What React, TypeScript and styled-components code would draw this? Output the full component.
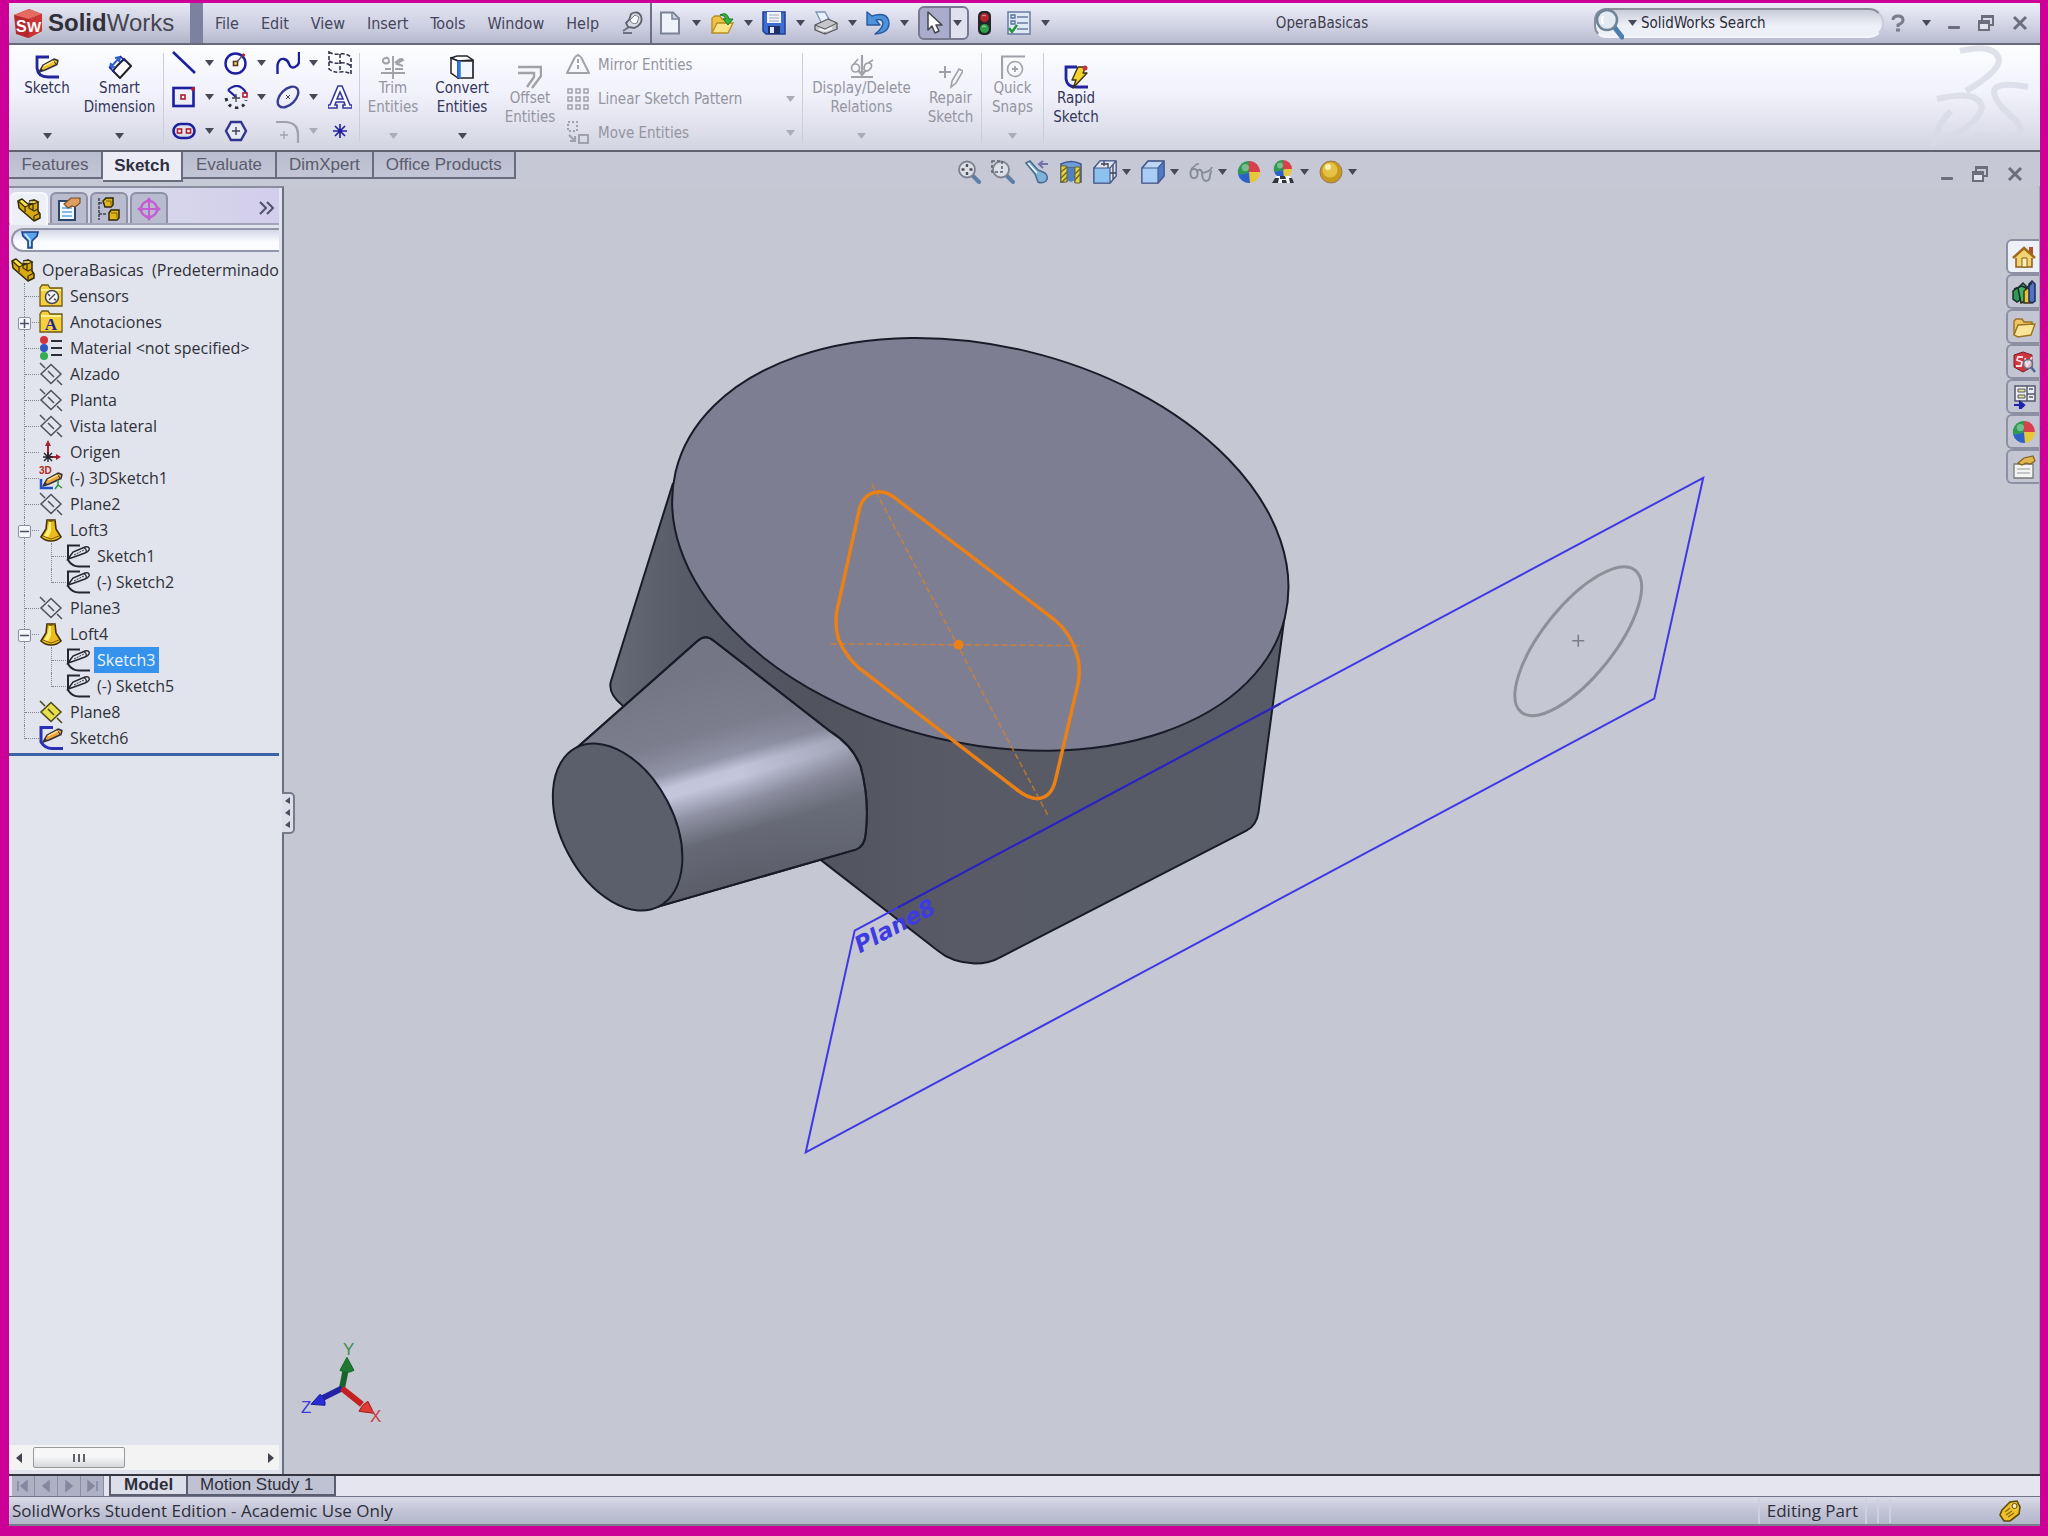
import React from "react";
import styled, { createGlobalStyle, css } from "styled-components";

const ui = `"DejaVu Sans Condensed", "DejaVu Sans", "Liberation Sans", sans-serif`;
const segoe = `"Open Sans", "Noto Sans", sans-serif`;
const arial = `"Liberation Sans", Arial, sans-serif`;

const Global = createGlobalStyle`
  *, *::before, *::after { box-sizing: border-box; }
  body { margin: 0; background: #cc0096; }
  button, input { font: inherit; color: inherit; margin: 0; padding: 0; border: 0; background: none; }
  svg { display: block; flex: none; }
  ul { list-style: none; margin: 0; padding: 0; }
`;

/* ---------- shell ---------- */

const Frame = styled.div`
  min-height: 100vh;
  display: flex;
  flex-direction: column;
  padding: 3px 8px 10px 9px;
  background: #cc0096;
  color: #3b3c50;
  font: 15px/19px ${ui};
`;

const TitleBar = styled.header`
  display: flex;
  align-items: stretch;
  height: 42px;
  border-bottom: 2px solid #666a7a;
  background: linear-gradient(#eceefa, #d5d7e7 50%, #b8bbcf);
`;

const Brand = styled.div`
  display: flex;
  align-items: center;
  gap: 5px;
  width: 181px;
  padding-left: 4px;
  background: linear-gradient(#e6e8f4, #c9cbdd 60%, #b2b5c9);
`;

const BrandName = styled.h1`
  margin: 0;
  color: #45464f;
  font: 400 24px/30px ${arial};
  b { color: #2f3038; }
`;

const MenuBar = styled.nav`
  display: flex;
  align-items: center;
  padding: 0 5px 0 1px;
  border-left: 13px solid #7d81a0;
  border-right: 2px solid #6d7086;
  background: linear-gradient(#e2e4f2, #cdcfe1 60%, #b6b9cd);
  > :last-child { margin-left: 11px; }
`;

const MenuItem = styled.button`
  height: 40px;
  padding: 0 11px;
  color: #44455a;
  font-size: 16px;
`;

const QuickBar = styled.div`
  display: flex;
  align-items: center;
  padding-left: 6px;
  gap: 9px;
`;

const Tool = styled.button<{ $gap?: number }>`
  display: inline-flex;
  align-items: center;
  gap: ${(p) => p.$gap ?? 10}px;
  height: 32px;
`;

const SelectTool = styled(Tool)`
  height: 34px;
  width: 51px;
  padding-left: 5px;
  gap: 10px;
  border: 2px solid #767990;
  border-radius: 6px;
  background: linear-gradient(90deg, #a9accb 0 29px, #767990 29px 31px, #dfe1ee 31px);
`;

const DocTitle = styled.span`
  flex: 1;
  align-self: center;
  text-align: center;
  color: #3d3e4e;
`;

const SearchBox = styled.label`
  align-self: center;
  display: flex;
  align-items: center;
  gap: 4px;
  width: 290px;
  height: 30px;
  border: 2px solid #8a8d9c;
  border-bottom-color: #f4f5fb;
  border-right-color: #c9cbd8;
  border-radius: 12px 15px 15px 12px;
  background: linear-gradient(#c9cbda, #eef0f8 60%);
`;

const SearchInput = styled.input`
  flex: 1;
  min-width: 0;
  height: 24px;
  color: #2b2c38;
  outline: none;
  &::placeholder { color: #2b2c38; opacity: 1; }
`;

const WindowControls = styled.div<{ $gap: number; $end: number }>`
  display: flex;
  align-items: center;
  gap: ${(p) => p.$gap}px;
  padding-right: ${(p) => p.$end}px;
  padding-left: 7px;
`;

/* ---------- ribbon ---------- */

const Ribbon = styled.section`
  display: flex;
  height: 107px;
  padding-left: 9px;
  border-bottom: 2px solid #60636f;
  background: linear-gradient(#fcfeff, #f1f2fb 45%, #e4e5f0 70%, #d2d4e1);
`;

const Divider = styled.span`
  width: 1px;
  margin: 8px 0;
  background: #cbcdd9;
`;

const BigButton = styled.button<{ $w: number; $low?: boolean; disabled?: boolean }>`
  display: flex;
  flex-direction: column;
  align-items: center;
  width: ${(p) => p.$w}px;
  padding: ${(p) => (p.$low ? 20 : 10)}px 0 11px;
  line-height: 19px;
  white-space: nowrap;
  color: ${(p) => (p.disabled ? "#94959f" : "#34355a")};
  > :last-child { margin-top: ${(p) => (p.$low ? 0 : "auto")}; }
`;

const ToolGrid = styled.div`
  display: grid;
  grid-template-columns: repeat(3, 52px) 24px;
  grid-auto-rows: 34px;
  padding: 2px 7px 0 8px;
`;

const SmallList = styled.div`
  display: grid;
  grid-auto-rows: 34px;
  width: 240px;
  padding: 3px 7px 0 4px;
`;

const SmallButton = styled.button`
  display: flex;
  align-items: center;
  gap: 8px;
  color: #94959f;
  text-align: left;
  span { flex: 1; }
`;

const Push = styled.div`
  flex: 1;
  display: flex;
  justify-content: flex-end;
  padding-right: 10px;
`;

/* ---------- tab strip ---------- */

const Strip = styled.div`
  display: flex;
  height: 34px;
  background: #c6c8d5;
`;

const Tabs = styled.div`
  display: flex;
  align-items: flex-start;
  width: 275px;
  white-space: nowrap;
`;

const ViewBar = styled.div`
  flex: 1;
  display: grid;
  grid-template-rows: 34px;
  > * { grid-area: 1 / 1; min-height: 0; }
  > :last-child { justify-self: end; padding-top: 9px; }
`;

const Tab = styled.button<{ $active?: boolean }>`
  flex: none;
  min-width: ${(p) => (p.$active ? 80 : 94)}px;
  height: ${(p) => (p.$active ? 30 : 27)}px;
  padding: 0 ${(p) => (p.$active ? 11 : 12)}px;
  border: solid #696c7c;
  border-width: 0 2px 2px 0;
  background: ${(p) => (p.$active ? "#ececf6" : "linear-gradient(#b9bcce, #c3c6d6)")};
  color: ${(p) => (p.$active ? "#2f3040" : "#5a5c6b")};
  font: ${(p) => (p.$active ? 700 : 400)} 17px/22px ${arial};
`;

const HeadsUp = styled.div`
  justify-self: center;
  display: flex;
  align-items: center;
  gap: 10px;
  padding: 6px 10px 0 0;
`;

/* ---------- work area ---------- */

const Work = styled.main`
  flex: 1;
  display: flex;
  min-height: 0;
`;

const Panel = styled.aside`
  position: relative;
  display: flex;
  flex-direction: column;
  width: 275px;
  padding-right: 3px;
  border-top: 2px solid #8b8ea1;
  border-right: 2px solid #6c6f82;
  background: #e1e4ec;
`;

const PanelTabs = styled.div`
  display: flex;
  align-items: flex-end;
  gap: 2px;
  height: 37px;
  padding-left: 1px;
  border-bottom: 2px solid #a2a5b8;
  background: linear-gradient(90deg, #d8daea 40%, #d2cdec);
`;

const PanelTab = styled.button<{ $active?: boolean }>`
  display: grid;
  place-items: center;
  width: 38px;
  height: 31px;
  border: 2px solid #8e91a6;
  border-bottom: 0;
  border-radius: 6px 6px 0 0;
  background: ${(p) => (p.$active ? "#eef0f8" : "#b9bccf")};
  ${(p) => p.$active && css`border-color: #f6f7fc; margin-bottom: -2px; height: 33px;`}
`;

const More = styled.button`
  margin: 0 4px 0 auto;
  height: 30px;
`;

const Filter = styled.label`
  display: flex;
  align-items: center;
  height: 24px;
  margin: 3px 0 5px 2px;
  padding-left: 8px;
  border: 2px solid #9296ab;
  border-right: 0;
  border-radius: 12px 0 0 12px;
  background: linear-gradient(#d4d6e6, #fbfcff 60%);
  input { flex: 1; min-width: 0; outline: none; }
`;

const Row = styled.li`
  position: relative;
  display: flex;
  align-items: center;
  height: 26px;
  white-space: nowrap;
  font: 16px/24px ${segoe};
  color: #30313a;
`;

const Guide = styled.span<{ $w: number; $end?: boolean }>`
  flex: none;
  align-self: flex-start;
  width: ${(p) => p.$w}px;
  height: ${(p) => (p.$end ? 14 : 26)}px;
  border-right: 1px dotted #85878f;
`;

const RootPad = styled.span`
  flex: none;
  width: 2px;
`;

const Dash = styled.span`
  flex: none;
  width: 14px;
  border-top: 1px dotted #85878f;
`;

const Expander = styled.button`
  position: absolute;
  left: 9px;
  top: 8px;
  width: 13px;
  height: 13px;
  display: grid;
  place-items: center;
  border: 1px solid #8c8fa3;
  border-radius: 2px;
  background: #f6f7fb;
`;

const RowLabel = styled.span<{ $selected?: boolean }>`
  margin-left: 4px;
  padding: 0 3px;
  line-height: 26px;
  ${(p) => p.$selected && css`background: #3593ee; color: #eef5ff;`}
`;

const Rollback = styled.div`
  height: 3px;
  margin-top: 2px;
  background: #3d62a6;
`;

const ScrollBar = styled.div`
  display: flex;
  align-items: center;
  gap: 10px;
  height: 25px;
  margin-top: auto;
  margin-bottom: 4px;
  padding: 0 4px 0 6px;
  background: #f3f3f4;
`;

const Thumb = styled.button`
  display: grid;
  place-items: center;
  width: 92px;
  height: 21px;
  margin-right: auto;
  border: 1px solid #97989c;
  border-radius: 2px;
  background: linear-gradient(#f7f7f8 45%, #d6d7da);
`;

const Handle = styled.button`
  position: absolute;
  left: 273px;
  top: 604px;
  width: 13px;
  height: 42px;
  display: grid;
  place-items: center;
  border: 2px solid #777a8c;
  border-left: 0;
  border-radius: 0 5px 5px 0;
  background: #dcdeea;
`;

const Viewport = styled.section`
  flex: 1;
  min-width: 0;
  display: grid;
  border-right: 1px solid #a5a7b6;
  background: #c5c8d3;
  > * { grid-area: 1 / 1; min-width: 0; min-height: 0; }
`;

const TaskPane = styled.nav`
  justify-self: end;
  align-self: start;
  display: grid;
  grid-auto-rows: 35px;
  margin-top: 53px;
`;

const TaskTab = styled.button<{ $active?: boolean }>`
  display: grid;
  place-items: center;
  width: 33px;
  border: 2px solid #8d90a3;
  border-right: 0;
  border-radius: 6px 0 0 6px;
  background: ${(p) => (p.$active ? "#eef0f8" : "#c3c5d3")};
`;

/* ---------- bottom ---------- */

const StudyBar = styled.div`
  display: flex;
  height: 23px;
  padding-left: 3px;
  border-top: 2px solid #34353f;
  border-bottom: 1px solid #72758a;
  background: #e4e5ef;
`;

const NavButton = styled.button`
  display: grid;
  place-items: center;
  width: 23px;
  border-right: 1px solid #8b8ea2;
  background: #aeb1c3;
`;

const StudyTab = styled.button<{ $active?: boolean }>`
  margin-left: ${(p) => (p.$active ? 5 : 0)}px;
  padding: 0 ${(p) => (p.$active ? 13 : 20)}px 0 ${(p) => (p.$active ? 13 : 12)}px;
  border: solid #5b5e70;
  border-width: 0 2px 2px ${(p) => (p.$active ? 2 : 0)}px;
  background: ${(p) => (p.$active ? "#dcdeea" : "#bfc2d2")};
  color: #2d2e3a;
  font: ${(p) => (p.$active ? 700 : 400)} 17px/18px ${arial};
`;

const StatusBar = styled.footer`
  display: flex;
  align-items: center;
  height: 29px;
  padding: 0 19px 0 3px;
  border-bottom: 2px solid #7b7d8e;
  background: linear-gradient(#d9dbe8, #c3c5d7 50%, #b3b6c9);
  color: #2d2e3a;
  font: 17px/26px ${segoe};
`;

const StatusCell = styled.span`
  margin-left: auto;
  padding: 0 7px;
  border: solid #ced0df;
  border-width: 0 2px;
`;

const StatusGap = styled.span`
  width: 12px;
  height: 24px;
  border-right: 2px solid #ced0df;
  &:last-of-type { margin-right: 108px; }
`;

/* ---------- icons ---------- */

type IconProps = { children: React.ReactNode; w?: number; h?: number };
const Icon = ({ children, w = 24, h = 24 }: IconProps) => (
  <svg width={w} height={h} viewBox={`0 0 ${w} ${h}`} fill="none" aria-hidden="true">
    {children}
  </svg>
);

const Caret = ({ dim }: { dim?: boolean }) => (
  <svg width="9" height="6" viewBox="0 0 9 6" aria-hidden="true">
    <path d="M0 0h9L4.5 6z" fill={dim ? "#aaacb6" : "#474957"} />
  </svg>
);

const BLUE = "#1c1f9e";
const GREY = "#a0a1aa";

const Pencil = ({ fill = "#f2c22c", line = "#33303a" }: { fill?: string; line?: string }) => (
  <>
    <path d="M4 16 8 9 19 3l4 1.500-1 4L10 14z" fill={fill} stroke={line} strokeWidth="1.400" strokeLinejoin="round" />
    <path d="M18 4l3 4" stroke={line} strokeWidth="1" />
    <path d="M9 10l10-5" stroke="#fff0a0" strokeWidth="1.200" />
    <path d="M4 16l2-4 2 2z" fill={line} />
  </>
);

const Part = () => (
  <Icon>
    <path d="M1 3 5 1l7 6 3-1 2-4 4 2v9l2 3v4l-6 3L2 10z" fill="#d9a910" stroke="#2e2708" strokeWidth="1.500" strokeLinejoin="round" />
    <path d="M1 3l7 6v5M12 7l-4 2M12 3l5-1 4 2-5 2-4-1v5l5 3 4-2M16 6v7M17 18l6-3M17 18v5" stroke="#3f350a" strokeWidth="1.300" />
    <path d="M5 2l6 5-3 1-5-5zM13 4l4-1 3 1-4 1z" fill="#f7e04e" />
  </Icon>
);

const Plane = ({ fill = "none", line = "#50515c" }: { fill?: string; line?: string }) => (
  <Icon>
    <path d="M12 2.500 22 12 12 21.500 2 12z" fill={fill} stroke={line} strokeWidth="1.500" />
    <path d="M1 1l5 5M9 9l6 6M18 18l5 5" stroke={line} strokeWidth="1.500" />
  </Icon>
);

const SketchGlyph = ({ blue }: { blue?: boolean }) => (
  <Icon>
    <path d="M14 1.500H2V16q4 6.500 11 6.500h11" stroke={blue ? "#2a2fb8" : "#25262e"} strokeWidth={blue ? 3 : 2} />
    {blue ? (
      <Pencil fill="#eda43a" />
    ) : (
      <>
        <path d="M2 15 7 8l12-5q5-1 4 3-1 2-4 3L8 13z" fill="#e6e8ee" stroke="#25262e" strokeWidth="1.500" />
        <path d="M18 4q3 1 2 4" stroke="#25262e" strokeWidth="1.200" />
        <path d="M8 11l10-5" stroke="#25262e" strokeDasharray="2 1" />
      </>
    )}
  </Icon>
);

const Loft = () => (
  <Icon>
    <path d="M8 2h8l1 9 5 8q-4 4-10 4T2 19l5-8z" fill="#eebc18" stroke="#3f3208" strokeWidth="1.600" />
    <path d="M10 4h2v9l-3 7-4-2 4-7z" fill="#fff07a" />
    <path d="M8 2.500q4 2 8 0M4 18l8 3 8-3" stroke="#7c6208" />
  </Icon>
);

const Folder = ({ children }: { children: React.ReactNode }) => (
  <Icon>
    <path d="M1 22V4l2-3h6l2 3h12v18z" fill="#f5cf3c" stroke="#6d5a13" strokeWidth="1.300" />
    <path d="M2 6h20" stroke="#fdf08e" strokeWidth="2" />
    {children}
  </Icon>
);

const Ball = ({ r = 11, cy = 12 }: { r?: number; cy?: number }) => (
  <g transform={`translate(12 ${cy})`}>
    <path d={`M0 0V${-r}A${r} ${r} 0 0 0 ${-r} 2q6 2 11-2`} fill="#2f9a50" />
    <path d={`M0 0V${-r}A${r} ${r} 0 0 1 ${r} 0z`} fill="#d8404c" />
    <path d={`M0 0H${r}A${r} ${r} 0 0 1 1 ${r}z`} fill="#e8c83a" />
    <path d={`M0 0 1 ${r}A${r} ${r} 0 0 1 ${-r} 2q6 1 11-2`} fill="#2c62c8" />
    <circle cx={-r / 3} cy={-r / 2.500} r={r / 3} fill="#fff" opacity=".35" />
  </g>
);

const Lens = ({ children }: { children?: React.ReactNode }) => (
  <Icon>
    <path d="M15.500 15.500 22 22" stroke="#5c7fa6" strokeWidth="4" strokeLinecap="round" />
    <circle cx="10" cy="9.500" r="8" fill="#dcdfe8" stroke="#7f828f" strokeWidth="1.800" />
    {children}
  </Icon>
);

const Cube = ({ wire }: { wire?: boolean }) => (
  <Icon>
    <path d="M1 8 7 1h16v15l-6 7H1z" fill="#bcd6f4" stroke="#4a5c8c" strokeWidth="1.500" strokeLinejoin="round" />
    {wire && <path d="M7 1h16v15l-6 7V8H1z" fill="#e1e4ef" />}
    <path d="M1 8h16v15H1z" fill={wire ? "#8cc3ee" : "#a9cdf4"} />
    {!wire && <path d="M17 8l6-7v15l-6 7z" fill="#4e7cc8" />}
    <path d="M1 8 7 1h16v15l-6 7M1 8h16v15H1zM17 8l6-7" stroke="#4a5c8c" strokeWidth="1.200" />
    {wire && <path d="M11 1v5M8 4h7M17 13h6M20 5v14M15 8V3" stroke="#3d4259" strokeWidth="1.300" />}
  </Icon>
);

const NewDoc = () => (
  <Icon>
    <path d="M3 1.500h12l6 6v15H3z" fill="#eef3fb" stroke="#7b8494" strokeWidth="2" />
    <path d="M14 2v6h6" fill="#cbd4e4" stroke="#7b8494" strokeWidth="1.500" />
  </Icon>
);
const OpenDoc = () => (
  <Icon>
    <path d="M2 22V7l3-2h5l2 3h7v4" fill="#eec245" stroke="#b58d22" strokeWidth="1.300" />
    <path d="M2 22 7 12h16l-5 10z" fill="#fbe388" stroke="#b58d22" strokeWidth="1.300" />
    <path d="M10 4q7-4 9 4h4l-5 6-5-6h3q-1-4-6-4z" fill="#35b53c" stroke="#1d7a26" />
  </Icon>
);
const Save = () => (
  <Icon>
    <path d="M1 1h22v22H4l-3-3z" fill="#3b6ed0" stroke="#1f3f8e" strokeWidth="1.500" />
    <path d="M5 1h14v11H5z" fill="#f3f5fa" />
    <path d="M7 4h10M7 7h10M7 10h10" stroke="#9aa5bb" />
    <path d="M6 15h12v8H6z" fill="#1d2f66" />
    <path d="M8 16h4v6H8z" fill="#dfe6f4" />
  </Icon>
);
const Print = () => (
  <Icon>
    <path d="M2 1h9l5 9-8 3z" fill="#e8f0fc" stroke="#7f93b5" strokeWidth="1.300" />
    <path d="M1 14 14 8l9 4v6l-12 5-10-4z" fill="#c6c7ca" stroke="#55565c" strokeWidth="1.300" strokeLinejoin="round" />
    <path d="M1 14l10 4 12-6M11 18v5" stroke="#55565c" />
    <path d="M5 18l6 2 7-3" stroke="#f4f4f4" strokeWidth="2" />
  </Icon>
);
const Undo = () => (
  <Icon>
    <path d="M1 1v13h13l-4-5q6-2 7 3 0 5-8 11 14-1 14-11Q22 0 6 5z" fill="#4c93dc" stroke="#275a9f" strokeWidth="1.400" strokeLinejoin="round" />
  </Icon>
);
const Pointer = () => (
  <Icon w={18}>
    <path d="M3 1v18l4-4 3 7 4-2-3-6h6z" fill="#fff" stroke="#43454f" strokeWidth="1.500" strokeLinejoin="round" />
  </Icon>
);
const Traffic = () => (
  <Icon w={20}>
    <rect x="0" y="0" width="13" height="24" rx="5" fill="#24262c" />
    <circle cx="6.500" cy="6.500" r="4.500" fill="#b3242c" />
    <circle cx="6.500" cy="17.500" r="4.500" fill="#2e9e48" />
    <path d="M4 5q2-2 4 0M4 16q2-2 4 0" stroke="#fff" opacity=".6" />
  </Icon>
);
const Options = () => (
  <Icon>
    <path d="M1 1h22v22H1z" fill="#dfe9f4" stroke="#6b7ba0" strokeWidth="1.500" />
    <path d="M4 4h4v3H4zM4 10h4v3H4z" stroke="#54719e" strokeWidth="1.300" />
    <path d="M10 6h11M10 12h11M10 18h11" stroke="#6b7ba0" strokeWidth="1.500" />
    <path d="M2 17l3 4 5-7" stroke="#24963b" strokeWidth="2.500" />
  </Icon>
);
const Pin = () => (
  <Icon>
    <path d="M2 20l6-4M2 22h9" stroke="#70727f" strokeWidth="2" />
    <path d="M10 3q7-4 10 2 2 6-3 10l-4 2-6-1-2-4 3-3z" fill="#d7d9e4" stroke="#5f616d" strokeWidth="1.800" />
    <path d="M9 9q2 5 7 3l2-6-4-2z" fill="#fff" stroke="#7a7c88" />
  </Icon>
);
const Minimise = () => (
  <Icon w={12} h={20}>
    <rect x="0" y="13" width="12" height="3" rx="1" fill="#6c6e7b" />
  </Icon>
);
const Restore = () => (
  <Icon w={18} h={18}>
    <path d="M5 7V2h11v9h-4" stroke="#6c6e7b" strokeWidth="2" />
    <path d="M2 7h10v9H2z" fill="#e2e3ec" stroke="#6c6e7b" strokeWidth="2" />
    <path d="M2 9h10M5 3h11" stroke="#6c6e7b" strokeWidth="2" />
  </Icon>
);
const Close = () => (
  <Icon w={16} h={16}>
    <path d="M2 2l12 12M14 2 2 14" stroke="#6c6e7b" strokeWidth="3" />
  </Icon>
);
const Help = () => (
  <Icon w={14} h={18}>
    <path d="M2 6q0-4 5-4t5 4q0 3-5 5v2" stroke="#7a7c8a" strokeWidth="3" />
    <rect x="5" y="14.500" width="4" height="3" fill="#7a7c8a" />
  </Icon>
);

/* sketch ribbon */
const SketchIcon = () => (
  <Icon>
    <path d="M14 2H2v11q1 9 11 9h11" stroke="#22259c" strokeWidth="2.800" />
    <g transform="translate(0 1)"><Pencil /></g>
  </Icon>
);
const Dimension = () => (
  <Icon>
    <path d="M9 11l7-7 7 7-11 12-7-7z" fill="#fff" stroke="#20212b" strokeWidth="2" />
    <path d="M2 13 12 2M2 13l1-5M2 13l5-1M12 2 7 3M12 2l-1 5" stroke="#2c5fd0" strokeWidth="2" />
    <path d="M12 1l5 5M1 12l6 6" stroke={BLUE} strokeWidth="1.600" />
  </Icon>
);
const Line = () => (
  <Icon><path d="M1 1l22 21" stroke={BLUE} strokeWidth="2.600" /></Icon>
);
const RedDot = ({ x, y }: { x: number; y: number }) => (
  <rect x={x - 2} y={y - 2} width="4" height="4" fill="#fff" stroke="#b01c2c" strokeWidth="1.600" />
);
const Circle = () => (
  <Icon>
    <circle cx="11.500" cy="12.500" r="10" stroke={BLUE} strokeWidth="2.400" />
    <path d="M12 12l8-9" stroke="#4a4c5c" strokeWidth="1.200" />
    <rect x="9.500" y="10.500" width="4" height="4" fill="#f6e38c" stroke="#5a3b20" strokeWidth="1.600" />
    <circle cx="19.500" cy="4" r="1.600" fill="#b01c2c" />
  </Icon>
);
const Spline = () => (
  <Icon><path d="M1.500 23V14Q3 7 8 8q4 1 5 5 2 5 6 3 4-2 4-5V1" stroke={BLUE} strokeWidth="2.400" /></Icon>
);
const SketchPlane = () => (
  <Icon>
    <path d="M1 1q5 3 11 2t11 3v17q-5-3-11-2T1 18zM1 10q5 3 11 2t11 3M12 3v18" stroke="#33344a" strokeWidth="1.600" strokeDasharray="4 2" />
  </Icon>
);
const Rect = () => (
  <Icon>
    <rect x="1.500" y="3" width="20" height="18" stroke={BLUE} strokeWidth="2.600" />
    <RedDot x={11} y={12} /><circle cx="21" cy="4" r="2" fill="#b01c2c" />
  </Icon>
);
const Arc = () => (
  <Icon>
    <path d="M4 5Q12-2 18 3q5 4 4 8M4 5l8 7" stroke={BLUE} strokeWidth="2.200" />
    <path d="M2 13q2 9 10 10 9-1 10-8" stroke="#2e2f3c" strokeWidth="3" strokeDasharray="3 4" />
    <path d="M12 9v8M8 13h8" stroke="#3f4150" strokeWidth="1.300" />
    <RedDot x={21} y={10} />
  </Icon>
);
const EllipseIcon = () => (
  <Icon>
    <ellipse cx="12" cy="12" rx="12.500" ry="7.500" transform="rotate(-45 12 12)" stroke="#3a3e92" strokeWidth="2.400" />
    <path d="M10 10l4 4M14 10l-4 4" stroke="#3f4150" />
  </Icon>
);
const TextIcon = () => (
  <Icon>
    <path d="M10 1h4l8 19h2v3h-9v-3h2l-1-3H8l-1 3h2v3H0v-3h2zM12 7l-3 7h6z" fill="#fff" stroke="#3437a0" strokeWidth="1.600" />
  </Icon>
);
const Slot = () => (
  <Icon>
    <rect x="1.500" y="5" width="21" height="14" rx="7" stroke={BLUE} strokeWidth="2.600" />
    <RedDot x={7.500} y={12} /><RedDot x={16.500} y={12} />
  </Icon>
);
const Polygon = () => (
  <Icon>
    <path d="M7 3h10l5 9-5 9H7l-5-9z" fill="#e9eaf8" stroke="#30348e" strokeWidth="2.400" />
    <path d="M12 8v8M8 12h8" stroke="#3f4150" strokeWidth="1.400" />
  </Icon>
);
const Fillet = () => (
  <Icon>
    <path d="M0 3h10q12 1 12 12v9" stroke={GREY} strokeWidth="2.200" />
    <path d="M8 12v8M4 16h8" stroke={GREY} strokeWidth="1.300" />
  </Icon>
);
const Point = () => (
  <Icon><path d="M12 5v14M5 12h14M7 7l10 10M17 7 7 17" stroke={BLUE} strokeWidth="1.600" /></Icon>
);
const Trim = () => (
  <Icon>
    <path d="M12 1v23M0 18h24M4 14h6M14 14h8M6 3q-5 0-4 4 3 3 6 0 0-5-3-4M14 8q6-6 8-3-3 1-6 4l6 2" stroke={GREY} strokeWidth="1.900" />
  </Icon>
);
const Convert = () => (
  <Icon>
    <path d="M1 3 7 1h10l6 4-15 1z" fill="#fff" stroke="#24252f" strokeWidth="1.500" />
    <path d="M1 3l7 3v17l-7-5z" fill="#fff" stroke="#24252f" strokeWidth="1.500" />
    <path d="M8 6h15v17H8z" fill="#f2f6fd" stroke="#24252f" strokeWidth="1.700" />
    <path d="M9 6v17" stroke="#2c7be0" strokeWidth="3.500" />
  </Icon>
);
const Offset = () => (
  <Icon>
    <path d="M0 2h23v9l-9 12" stroke={GREY} strokeWidth="2.400" />
    <path d="M0 8h16v4l-7 10" stroke={GREY} strokeWidth="2.400" />
  </Icon>
);
const Mirror = () => (
  <Icon>
    <path d="M9 4 1 20h8M15 4l8 16h-8" stroke={GREY} strokeWidth="2" strokeLinejoin="round" />
    <path d="M9 4l3-2 3 2M9 20h6" stroke={GREY} strokeWidth="2" />
    <path d="M12 6v12" stroke={GREY} strokeWidth="2" strokeDasharray="4 2" />
  </Icon>
);
const Pattern = () => (
  <Icon>
    {[2, 10, 18].map((y) => [2, 10, 18].map((x) => <rect key={`${x}-${y}`} x={x} y={y} width="4" height="4" stroke={GREY} strokeWidth="1.500" />))}
  </Icon>
);
const Move = () => (
  <Icon>
    <path d="M2 1h9v9H2z" stroke={GREY} strokeWidth="2" strokeDasharray="2 2" />
    <path d="M13 14h9v8h-9z" stroke={GREY} strokeWidth="2" />
    <path d="M3 14l6 6M9 15v5H4" stroke={GREY} strokeWidth="2" />
  </Icon>
);
const Relations = () => (
  <Icon>
    <path d="M12 0v20M1 22h22M8 15l4 5 4-5" stroke={GREY} strokeWidth="2.200" />
    <circle cx="5.500" cy="13" r="4" stroke={GREY} strokeWidth="1.700" />
    <path d="M3 10 8 4M14 15q0-7 4-7 5 0 3 5-4 5-7 2M18 8l5-3" stroke={GREY} strokeWidth="1.700" />
  </Icon>
);
const Repair = () => (
  <Icon>
    <path d="M6 1v12M0 7h12" stroke={GREY} strokeWidth="2" />
    <path d="M12 22l1-6 7-12 4 2-7 12z" stroke={GREY} strokeWidth="1.600" />
  </Icon>
);
const Snaps = () => (
  <Icon>
    <path d="M1 24V1.500h23" stroke={GREY} strokeWidth="2.200" />
    <circle cx="14" cy="14" r="7.500" stroke={GREY} strokeWidth="1.600" />
    <path d="M11 14h6M14 11v6" stroke={GREY} strokeWidth="1.800" />
  </Icon>
);
const Rapid = () => (
  <Icon>
    <path d="M13 2H2v12q1 8 10 8h12" stroke="#22259c" strokeWidth="2.800" />
    <path d="M14 2h8l-3 6h4L9 23l3-8H8z" fill="#f4d22c" stroke="#3c3410" strokeWidth="1.400" strokeLinejoin="round" />
    <circle cx="21" cy="3" r="2.500" fill="#c43540" />
  </Icon>
);

const Watermark = () => (
  <svg width="104" height="104" viewBox="0 0 104 104" fill="none" stroke="#d9dbe6" strokeWidth="6" opacity=".8" aria-hidden="true">
    <path d="M34 6Q68-2 73 14 74 26 40 46M11 54Q52 44 56 62 52 82 8 98 10 80 25 66M102 42Q70 36 68 46 68 56 84 70 100 84 92 90 80 94 48 90" />
  </svg>
);

const Logo = () => (
  <svg width="30" height="32" viewBox="0 0 30 32" aria-hidden="true">
    <path d="M1 8 16 2l13 5v17l-14 7L3 27z" fill="#b7282c" />
    <path d="M1 8 16 2l13 5-13 5z" fill="#e56a62" />
    <path d="M16 12l13-5v17l-13 7z" fill="#cc3434" />
    <text x="3" y="25" fill="#fff" fontFamily="Liberation Sans" fontWeight="700" fontSize="16">S</text>
    <text x="14" y="25" fill="#fff" fontFamily="Liberation Sans" fontWeight="700" fontSize="15">W</text>
  </svg>
);

/* ---------- data ---------- */

const menus = ["File", "Edit", "View", "Insert", "Tools", "Window", "Help"];

const quickTools: [string, React.FC][] = [
  ["New", NewDoc], ["Open", OpenDoc], ["Save", Save], ["Print", Print], ["Undo", Undo],
];

type GridTool = { name: string; icon: React.FC; caret?: boolean; dim?: boolean };
const gridTools: GridTool[] = [
  { name: "Line", icon: Line, caret: true },
  { name: "Circle", icon: Circle, caret: true },
  { name: "Spline", icon: Spline, caret: true },
  { name: "Plane", icon: SketchPlane },
  { name: "Rectangle", icon: Rect, caret: true },
  { name: "Arc", icon: Arc, caret: true },
  { name: "Ellipse", icon: EllipseIcon, caret: true },
  { name: "Text", icon: TextIcon },
  { name: "Slot", icon: Slot, caret: true },
  { name: "Polygon", icon: Polygon },
  { name: "Fillet", icon: Fillet, caret: true, dim: true },
  { name: "Point", icon: Point },
];

const Previous = () => (
  <Icon>
    <path d="M1 3l4-2 8 9 7 3q4 4 1 8-4 3-8 1l-3-8z" fill="#7fb2d8" stroke="#47698f" strokeWidth="1.500" />
    <path d="M3 3l9 10" stroke="#fff" strokeWidth="1.500" />
    <path d="M23 4h-8M18 1l-4 3 4 4" stroke="#7470ac" strokeWidth="2" />
  </Icon>
);
const Section = () => (
  <Icon>
    <path d="M2 4q10-5 20 0v18h-6V8H8v13l-6 1z" fill="#6f9dd8" stroke="#3f5690" strokeWidth="1.500" />
    <path d="M8 8h8v12l-4 2-4-2z" fill="#4f7fc4" />
    <path d="M2 6h6v16H2zM16 7h5v16h-5z" fill="#e3d24a" stroke="#6b6421" />
    <path d="M2 12l6-5M2 18l6-6M3 22l5-5M16 14l5-5M16 20l5-6" stroke="#6b6421" strokeWidth="1.300" />
  </Icon>
);
const Glasses = () => (
  <Icon>
    <path d="M2 9 8 4h2M14 13q8-2 9-6" stroke="#868996" strokeWidth="1.600" />
    <rect x="1.500" y="9" width="7" height="9" rx="3.500" stroke="#868996" strokeWidth="1.900" />
    <path d="M8 11q3-3 5 1 0 9 4 9t4-6q1-4 2-4" stroke="#868996" strokeWidth="1.900" />
  </Icon>
);
const Scene = () => (
  <Icon>
    <Ball r={9} cy={9} />
    <path d="M1 23l4-7h14l4 7z" fill="#f4f5f8" />
    <path d="M1 23l3-5h4l-1 5zM9 16h5l1 3H9zM11 20h4l1 3h-5zM18 18h3l2 5h-4z" fill="#33353d" />
  </Icon>
);
const Gold = () => (
  <Icon>
    <circle cx="12" cy="12" r="11" fill="#c79a1e" stroke="#9a7a5c" />
    <circle cx="11" cy="10" r="7.500" fill="#e5c145" />
    <circle cx="9" cy="7" r="3" fill="#fbf1b4" />
  </Icon>
);

const viewTools: { name: string; icon: React.ReactNode; caret?: boolean }[] = [
  { name: "Zoom to fit", icon: <Lens><path d="M10 4v3M10 12v3M4.500 9.500h3M12.500 9.500h3" stroke="#4d505e" strokeWidth="2.400" /></Lens> },
  { name: "Zoom to area", icon: <Lens><path d="M1 1h10v11H1z" stroke="#5f6270" strokeWidth="1.600" strokeDasharray="3 2" /></Lens> },
  { name: "Previous view", icon: <Previous /> },
  { name: "Section view", icon: <Section /> },
  { name: "View orientation", icon: <Cube wire />, caret: true },
  { name: "Display style", icon: <Cube />, caret: true },
  { name: "Hide or show items", icon: <Glasses />, caret: true },
  { name: "Edit appearance", icon: <Icon><Ball /></Icon> },
  { name: "Apply scene", icon: <Scene />, caret: true },
  { name: "View settings", icon: <Gold />, caret: true },
];

const Properties = () => (
  <Icon>
    <path d="M2 4h16v19H2z" fill="#f5f9fd" stroke="#2b4668" strokeWidth="2" />
    <path d="M5 11h10M5 15h10M5 19h10" stroke="#58a8e0" strokeWidth="1.500" />
    <path d="M7 7l7-6h9v5l-5 4-3-1-4 2z" fill="#dc9f62" stroke="#7c4f27" strokeWidth="1.200" />
  </Icon>
);
const Config = () => (
  <Icon>
    <path d="M2 1v22M2 6h6M2 17h8" stroke="#3f404a" strokeWidth="1.500" strokeDasharray="3 1" />
    <path d="M6 4l3-3h7v7l-2 2H8zM12 16l2-3h8v8l-2 2h-8z" fill="#e0b51c" stroke="#2e2708" strokeWidth="1.500" />
    <path d="M9 4h5v4M14 16h6v5" stroke="#7b6410" />
  </Icon>
);
const Target = () => (
  <Icon>
    <circle cx="12" cy="12" r="8" stroke="#c35fd2" strokeWidth="2.500" />
    <path d="M12 1v22M1 12h22" stroke="#c35fd2" strokeWidth="2" />
    <path d="M12 0l3 4H9zM12 24l3-4H9zM0 12l4-3v6zM24 12l-4-3v6z" fill="#c35fd2" />
  </Icon>
);
const Funnel = () => (
  <Icon w={18} h={18}>
    <path d="M1 1h16l-1 4-5 5v7H7v-7L2 5z" fill="#5aa6ee" stroke="#1f3f80" strokeWidth="1.600" />
    <path d="M4 3l5 6v6" stroke="#d6ecff" strokeWidth="1.500" />
  </Icon>
);

const Sensor = () => (
  <Folder>
    <circle cx="13" cy="13" r="6.500" fill="#f4f5f8" stroke="#454958" strokeWidth="1.500" />
    <path d="M10 16l6-6M9 10l2 2M15 15l2 1" stroke="#454958" strokeWidth="1.400" />
  </Folder>
);
const Annot = () => (
  <Folder>
    <text x="12" y="20" textAnchor="middle" fill="#1d2794" fontFamily="Liberation Serif" fontWeight="700" fontSize="17">A</text>
  </Folder>
);
const Material = () => (
  <Icon>
    <circle cx="5" cy="4" r="4" fill="#d0343c" /><circle cx="5" cy="12" r="4" fill="#2e56c0" /><circle cx="5" cy="20" r="4" fill="#35ad52" />
    <path d="M12 5h11M12 12h11M12 19h11" stroke="#2b2c34" strokeWidth="2" />
  </Icon>
);
const Origin = () => (
  <Icon>
    <path d="M9 17V3M9 17h11" stroke="#a32130" strokeWidth="2" />
    <path d="M9 0l3 6H6zM22 17l-5-3v6z" fill="#a32130" />
    <path d="M9 12v10M4 17h10M5 13l8 8M13 13l-8 8" stroke="#24252e" strokeWidth="1.400" />
  </Icon>
);
const Sketch3D = () => (
  <Icon>
    <path d="M2 13v9h12" stroke="#1f52c8" strokeWidth="2.500" />
    <g transform="translate(0 4)"><Pencil fill="#eda43a" /></g>
    <path d="M19 14v5l-3 4M19 19l4 3" stroke="#2e9240" strokeWidth="1.500" />
    <text x="0" y="8" fill="#b02a22" fontFamily="Liberation Sans" fontWeight="700" fontSize="10">3D</text>
  </Icon>
);

type Node = { label: string; icon: React.ReactNode; sub?: boolean; box?: "+" | "-"; on?: boolean; end?: boolean };
const tree: Node[] = [
  { label: "Sensors", icon: <Sensor /> },
  { label: "Anotaciones", icon: <Annot />, box: "+" },
  { label: "Material <not specified>", icon: <Material /> },
  { label: "Alzado", icon: <Plane /> },
  { label: "Planta", icon: <Plane /> },
  { label: "Vista lateral", icon: <Plane /> },
  { label: "Origen", icon: <Origin /> },
  { label: "(-) 3DSketch1", icon: <Sketch3D /> },
  { label: "Plane2", icon: <Plane /> },
  { label: "Loft3", icon: <Loft />, box: "-" },
  { label: "Sketch1", icon: <SketchGlyph />, sub: true },
  { label: "(-) Sketch2", icon: <SketchGlyph />, sub: true, end: true },
  { label: "Plane3", icon: <Plane /> },
  { label: "Loft4", icon: <Loft />, box: "-" },
  { label: "Sketch3", icon: <SketchGlyph />, sub: true, on: true },
  { label: "(-) Sketch5", icon: <SketchGlyph />, sub: true, end: true },
  { label: "Plane8", icon: <Plane fill="#e8df4c" line="#4a4720" /> },
  { label: "Sketch6", icon: <SketchGlyph blue />, end: true },
];

const Home = () => (
  <Icon>
    <path d="M4 11v11h16V11" fill="#f3d271" stroke="#8a5b1c" strokeWidth="1.500" />
    <path d="M17 2h4v8h-4z" fill="#b4502c" />
    <path d="M1 13 12 3l11 10" fill="#f3d271" stroke="#a06a1c" strokeWidth="2.500" />
    <path d="M10 13h5v9h-5z" fill="#fff1b8" stroke="#8a5b1c" />
  </Icon>
);
const Library = () => (
  <Icon>
    <path d="M1 11l4-3 3 2v10l-3 2-4-3z" fill="#2f9c54" stroke="#1b2b2c" strokeWidth="1.500" />
    <path d="M6 8l5-5 3 3v15l-5 2z" fill="#43b465" stroke="#1b2b2c" strokeWidth="1.500" />
    <path d="M12 11l4-3 2 2v13h-6z" fill="#e9c23c" stroke="#3e350f" strokeWidth="1.500" />
    <path d="M17 4l3-3 3 3v17l-3 2-3-2z" fill="#4f74c4" stroke="#1e2c5a" strokeWidth="1.500" />
    <path d="M2 9l8-3 4 2 6-5" stroke="#1b2b2c" strokeWidth="1.500" />
  </Icon>
);
const Explorer = () => (
  <Icon>
    <path d="M2 20V6l2-2h6l2 3h8v4" fill="#eec560" stroke="#9b7420" strokeWidth="1.400" />
    <path d="M2 20 6 10l17-1-4 11-13 2z" fill="#fbe59a" stroke="#9b7420" strokeWidth="1.400" />
  </Icon>
);
const SearchCube = () => (
  <Icon>
    <path d="M2 5l9-3 9 3v12l-9 5-9-5z" fill="#cf3640" stroke="#77202a" />
    <path d="M11 7H6l-1 3 5 2-1 4H4M13 8l2 8 5-9" stroke="#f6dcdc" strokeWidth="1.800" />
    <circle cx="16" cy="14" r="4.500" fill="#e8ecf4" fillOpacity=".7" stroke="#5f6f90" strokeWidth="1.500" />
    <path d="M19 17l4 5" stroke="#4c6a94" strokeWidth="2.500" />
  </Icon>
);
const Palette = () => (
  <Icon>
    <path d="M3 1h20v15H3z" fill="#eceef2" stroke="#54586a" strokeWidth="1.500" />
    <path d="M6 4h7v3H6zM6 10h7v3H6z" fill="#e3e089" stroke="#54586a" />
    <path d="M15 1v15M15 9h8M17 4h4M17 12h4" stroke="#54586a" strokeWidth="1.500" />
    <path d="M2 20h7M8 17l4 3-4 4z" stroke="#2023b0" strokeWidth="2.200" fill="#2023b0" />
  </Icon>
);
const Custom = () => (
  <Icon>
    <path d="M2 9h19v14H2z" fill="#f4f4f2" stroke="#7a7a78" strokeWidth="1.300" />
    <path d="M5 14h13M5 18h13" stroke="#b5b6b8" strokeWidth="1.300" />
    <path d="M6 8l6-5 9-2 2 5-5 3-4-1-4 2z" fill="#e2b652" stroke="#84621d" strokeWidth="1.200" />
  </Icon>
);
const taskTabs: [string, React.ReactNode][] = [
  ["Resources", <Home />], ["Design library", <Library />], ["File explorer", <Explorer />],
  ["Search", <SearchCube />], ["View palette", <Palette />],
  ["Appearances", <Icon><Ball /></Icon>], ["Custom properties", <Custom />],
];

const navMarks = ["M2 2v10M11 2 5 7l6 5z", "M10 2 4 7l6 5z", "M4 2l6 5-6 5z", "M3 2l6 5-6 5zM12 2v10"];

/* ---------- model ---------- */

const conePath = "M577 748 698 641Q706 634 714 641L831 732Q853 746 861 767 870 800 866 834 865 847 856 850L655 908z";

const Model = () => (
  <svg width="100%" height="100%" viewBox="284 186 1756 1287" preserveAspectRatio="xMinYMin meet" fill="none" role="img" aria-label="Part model">
    <defs>
      <linearGradient id="body" gradientUnits="userSpaceOnUse" x1="612" y1="0" x2="1285" y2="0">
        <stop offset="0" stopColor="#666a76" />
        <stop offset=".1" stopColor="#585c68" />
        <stop offset=".3" stopColor="#51535f" />
        <stop offset=".5" stopColor="#585b65" />
        <stop offset="1" stopColor="#575b67" />
      </linearGradient>
      <linearGradient id="cone" gradientUnits="userSpaceOnUse" x1="720" y1="664" x2="786" y2="894">
        <stop offset="0" stopColor="#747685" />
        <stop offset=".26" stopColor="#7c7e8e" />
        <stop offset=".38" stopColor="#9193a6" />
        <stop offset=".44" stopColor="#c2c4da" />
        <stop offset=".48" stopColor="#c4c6dc" />
        <stop offset=".58" stopColor="#9092a4" />
        <stop offset=".7" stopColor="#676a76" />
        <stop offset="1" stopColor="#555863" />
      </linearGradient>
      <linearGradient id="shade" gradientUnits="userSpaceOnUse" x1="670" y1="0" x2="868" y2="0">
        <stop offset=".35" stopColor="#6c6e7c" stopOpacity="0" />
        <stop offset="1" stopColor="#6c6e7c" stopOpacity=".45" />
      </linearGradient>
    </defs>
    <g stroke="#191b28" strokeWidth="2" strokeLinejoin="round">
      <path d="M673 484 611 682Q608 694 623 706L822 861 938 951Q952 963 975 964 990 964 1002 957L1247 831Q1257 826 1259 813L1285 618 1240 500z" fill="url(#body)" />
      <ellipse cx="980.700" cy="544.500" rx="313.400" ry="198.700" transform="rotate(13.400 980.700 544.500)" fill="#7d7e91" />
      <path d={conePath} fill="url(#cone)" />
      <path d={conePath} fill="url(#shade)" />
      <ellipse cx="617.800" cy="827.400" rx="89.600" ry="56.100" transform="rotate(62.400 617.800 827.400)" fill="#5b5f6c" />
    </g>
    <g stroke="#ea8016">
      <path d="M860 508Q865 493 879 492 889 492 899 501L1055 620Q1071 633 1077 654 1081 665 1079 682L1056 780Q1052 798 1038 799 1028 799 1016 789L859 668Q846 656 839 640 835 628 837 612z" strokeWidth="3.500" />
      <path d="M872 484 1048 815M831 644l253 2" strokeWidth="1.500" strokeDasharray="6 3" opacity=".7" />
      <circle cx="959" cy="645" r="5" fill="#ea8016" stroke="none" />
    </g>
    <path d="M855 931 1704 478 1655 699 806 1153z" stroke="#3f38e4" strokeWidth="2" />
    <path d="M898 908 1281 704" stroke="#2b23b4" strokeWidth="2" />
    <text transform="translate(860 954) rotate(-28)" fill="#3f3be2" fontFamily="DejaVu Sans" fontWeight="700" fontStyle="italic" fontSize="23">Plane8</text>
    <ellipse cx="1579" cy="641.500" rx="91" ry="35.600" transform="rotate(-51.300 1579 641.500)" stroke="#8e9099" strokeWidth="3" />
    <path d="M1573 641h12M1579 635v12" stroke="#7b7d88" strokeWidth="1.500" />
    <path d="M342 1389 346 1369" stroke="#17632a" strokeWidth="6" />
    <path d="M347 1358l7 13q-7 4-14 0z" fill="#1d7a30" stroke="#17632a" />
    <path d="M342 1389 320 1400" stroke="#2222a4" strokeWidth="6" />
    <path d="M311 1405l9-10q6 4 5 11z" fill="#2a2ad6" stroke="#1b1b90" />
    <path d="M342 1389 362 1405" stroke="#c4201f" strokeWidth="6" />
    <path d="M374 1414l-15-2q3-7 9-10z" fill="#e03a34" stroke="#a01a18" />
    <g fontFamily="Liberation Sans" fontSize="17">
      <text x="343" y="1356" fill="#3d8a4d">Y</text>
      <text x="370" y="1423" fill="#cf3a3a">X</text>
      <text x="301" y="1414" fill="#3a3ad8">Z</text>
    </g>
  </svg>
);

/* ---------- app ---------- */

export default function App() {
  return (
    <Frame>
      <Global />
      <TitleBar>
        <Brand>
          <Logo />
          <BrandName><b>Solid</b>Works</BrandName>
        </Brand>
        <MenuBar aria-label="Main menu">
          {menus.map((m) => <MenuItem key={m}>{m}</MenuItem>)}
          <Tool aria-label="Pin menu"><Pin /></Tool>
        </MenuBar>
        <QuickBar>
          {quickTools.map(([name, Glyph]) => (
            <Tool key={name} aria-label={name}><Glyph /><Caret /></Tool>
          ))}
          <SelectTool aria-label="Select"><Pointer /><Caret /></SelectTool>
          <Tool aria-label="Rebuild"><Traffic /></Tool>
          <Tool aria-label="Options"><Options /><Caret /></Tool>
        </QuickBar>
        <DocTitle>OperaBasicas</DocTitle>
        <SearchBox>
          <svg width="28" height="34" viewBox="0 0 28 34" aria-hidden="true">
            <path d="M19 22l7 9" stroke="#4b7fae" strokeWidth="5" strokeLinecap="round" />
            <circle cx="11" cy="14" r="10" fill="#e4eaf2" stroke="#6f8496" strokeWidth="2.500" />
            <path d="M7 10q-2 4 0 8" stroke="#fff" strokeWidth="2" fill="none" />
          </svg>
          <Caret />
          <SearchInput aria-label="Search" placeholder="SolidWorks Search" />
        </SearchBox>
        <WindowControls $gap={17} $end={12}>
          <Tool aria-label="Help" $gap={17}><Help /><Caret /></Tool>
          <Tool aria-label="Minimise"><Minimise /></Tool>
          <Tool aria-label="Restore"><Restore /></Tool>
          <Tool aria-label="Close"><Close /></Tool>
        </WindowControls>
      </TitleBar>

      <Ribbon>
        <BigButton $w={58}><SketchIcon />Sketch<Caret /></BigButton>
        <BigButton $w={87}><Dimension />Smart<br />Dimension<Caret /></BigButton>
        <Divider />
        <ToolGrid>
          {gridTools.map(({ name, icon: Glyph, caret, dim }) => (
            <Tool key={name} aria-label={name} disabled={dim} $gap={9}><Glyph />{caret && <Caret dim={dim} />}</Tool>
          ))}
        </ToolGrid>
        <Divider />
        <BigButton $w={66} disabled><Trim />Trim<br />Entities<Caret dim /></BigButton>
        <BigButton $w={72}><Convert />Convert<br />Entities<Caret /></BigButton>
        <BigButton $w={64} $low disabled><Offset />Offset<br />Entities</BigButton>
        <SmallList>
          <SmallButton disabled><Mirror /><span>Mirror Entities</span></SmallButton>
          <SmallButton disabled><Pattern /><span>Linear Sketch Pattern</span><Caret dim /></SmallButton>
          <SmallButton disabled><Move /><span>Move Entities</span><Caret dim /></SmallButton>
        </SmallList>
        <Divider />
        <BigButton $w={117} disabled><Relations />Display/Delete<br />Relations<Caret dim /></BigButton>
        <BigButton $w={61} $low disabled><Repair />Repair<br />Sketch</BigButton>
        <Divider />
        <BigButton $w={61} disabled><Snaps />Quick<br />Snaps<Caret dim /></BigButton>
        <Divider />
        <BigButton $w={64} $low><Rapid />Rapid<br />Sketch</BigButton>
        <Push><Watermark /></Push>
      </Ribbon>

      <Strip>
        <Tabs>
          <Tab>Features</Tab>
          <Tab $active>Sketch</Tab>
          <Tab>Evaluate</Tab>
          <Tab>DimXpert</Tab>
          <Tab>Office Products</Tab>
        </Tabs>
        <ViewBar>
          <HeadsUp>
            {viewTools.map((t) => (
              <Tool key={t.name} aria-label={t.name} $gap={5}>{t.icon}{t.caret && <Caret />}</Tool>
            ))}
          </HeadsUp>
          <WindowControls $gap={18} $end={17}>
            <Tool aria-label="Minimise document"><Minimise /></Tool>
            <Tool aria-label="Restore document"><Restore /></Tool>
            <Tool aria-label="Close document"><Close /></Tool>
          </WindowControls>
        </ViewBar>
      </Strip>

      <Work>
        <Panel>
          <PanelTabs>
            <PanelTab $active aria-label="Feature tree"><Part /></PanelTab>
            <PanelTab aria-label="Properties"><Properties /></PanelTab>
            <PanelTab aria-label="Configurations"><Config /></PanelTab>
            <PanelTab aria-label="DimXpert"><Target /></PanelTab>
            <More aria-label="More">
              <Icon w={16} h={14}><path d="M1 1l6 6-6 6M8 1l6 6-6 6" stroke="#4f5164" strokeWidth="2" /></Icon>
            </More>
          </PanelTabs>
          <Filter><Funnel /><input aria-label="Filter tree" /></Filter>
          <ul>
            <Row><RootPad /><Part /><RowLabel>OperaBasicas&nbsp; (Predeterminado</RowLabel></Row>
            {tree.map((n) => (
              <Row key={n.label}>
                <Guide $w={16} $end={n.end && !n.sub} />
                {n.sub && <Guide $w={27} $end={n.end} />}
                <Dash />
                {n.icon}
                <RowLabel $selected={n.on}>{n.label}</RowLabel>
                {n.box && (
                  <Expander aria-label={n.box === "+" ? "Expand" : "Collapse"}>
                    <Icon w={9} h={9}><path d={n.box === "+" ? "M0 4.500h9M4.500 0v9" : "M0 4.500h9"} stroke="#4c4e60" strokeWidth="1.500" /></Icon>
                  </Expander>
                )}
              </Row>
            ))}
          </ul>
          <Rollback />
          <ScrollBar>
            <Tool aria-label="Scroll left"><Icon w={8} h={10}><path d="M7 0v10L1 5z" fill="#40424c" /></Icon></Tool>
            <Thumb aria-label="Scroll thumb"><Icon w={12} h={8}><path d="M1 0v8M6 0v8M11 0v8" stroke="#5f6069" strokeWidth="2" /></Icon></Thumb>
            <Tool aria-label="Scroll right"><Icon w={8} h={10}><path d="M1 0v10l6-5z" fill="#40424c" /></Icon></Tool>
          </ScrollBar>
          <Handle aria-label="Collapse panel">
            <Icon w={6} h={34}><path d="M5 1v7L0 5zM5 13v7l-5-3zM5 25v7l-5-3z" fill="#4c4e5c" /></Icon>
          </Handle>
        </Panel>
        <Viewport>
          <Model />
          <TaskPane aria-label="Task pane">
            {taskTabs.map(([name, icon], i) => <TaskTab key={name} aria-label={name} $active={i === 0}>{icon}</TaskTab>)}
          </TaskPane>
        </Viewport>
      </Work>

      <StudyBar>
        {navMarks.map((d) => (
          <NavButton key={d} aria-label="Scroll tabs">
            <Icon w={14} h={14}><path d={d} fill="#8488a0" stroke="#8488a0" strokeWidth="1.500" /></Icon>
          </NavButton>
        ))}
        <StudyTab $active>Model</StudyTab>
        <StudyTab>Motion Study 1</StudyTab>
      </StudyBar>
      <StatusBar>
        SolidWorks Student Edition - Academic Use Only
        <StatusCell>Editing Part</StatusCell>
        <StatusGap /><StatusGap />
        <Icon w={22} h={22}>
          <path d="M3 10 11 2l7-1 3 6-1 7-9 7-6 0-4-6z" fill="#efc22c" stroke="#5e4a0c" strokeWidth="1.600" />
          <circle cx="15.500" cy="6" r="2.500" fill="#fff4bf" stroke="#5e4a0c" />
          <path d="M6 12l5-4M7 15l6-4M9 17l6-4" stroke="#8a6c12" strokeWidth="1.300" />
        </Icon>
      </StatusBar>
    </Frame>
  );
}
